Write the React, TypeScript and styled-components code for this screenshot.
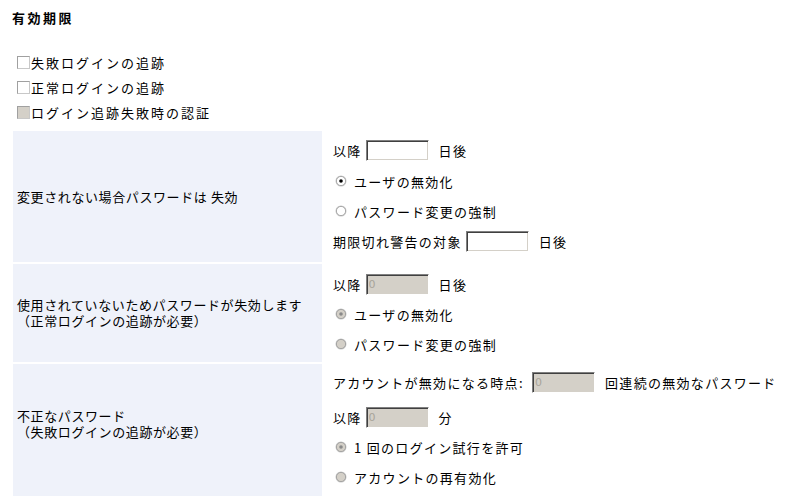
import React from "react";
import styled, { createGlobalStyle } from "styled-components";

const GlobalStyle = createGlobalStyle`
  body {
    margin: 8px;
    background: #ffffff;
    color: #000000;
    font-family: "Noto Sans CJK JP", "Noto Sans", sans-serif;
    font-size: 13px;
  }
`;

const Title = styled.h3`
  margin: 0;
  padding-left: 4px;
  height: 20px;
  line-height: 20px;
  font-size: 13px;
  font-weight: bold;
  letter-spacing: 2.5px;
`;

const CheckList = styled.div`
  margin-top: 22px;
  padding-left: 9px;
  display: flex;
  flex-direction: column;
`;

const CheckRow = styled.label`
  height: 25px;
  display: flex;
  align-items: center;
  gap: 1px;
  letter-spacing: 2px;
`;

const Box = styled.span<{ $disabled?: boolean }>`
  width: 13px;
  height: 13px;
  box-sizing: border-box;
  border: 1px solid #a0a0a0;
  border-right-color: #c8c8c8;
  border-bottom-color: #c8c8c8;
  background: ${(p) => (p.$disabled ? "#d4d0c8" : "#ffffff")};
`;

const Table = styled.div`
  margin: 6px 0 0 5px;
  display: grid;
  grid-template-columns: 309px 1fr;
  gap: 2px;
`;

const LabelCell = styled.div<{ $pb?: number }>`
  background: #eff2fa;
  padding: 0 0 ${(p) => p.$pb ?? 0}px 4px;
  display: flex;
  flex-direction: column;
  justify-content: center;
  line-height: 16px;
  letter-spacing: 0.6px;
`;

const LabelLine = styled.span`
  display: block;
  white-space: nowrap;
`;

const FieldCell = styled.div<{ $pt: number; $pb: number }>`
  padding: ${(p) => p.$pt}px 9px ${(p) => p.$pb}px 9px;
  display: flex;
  flex-direction: column;
`;

const Line = styled.div<{ $h?: number; $mb?: number }>`
  height: ${(p) => p.$h ?? 30}px;
  margin-bottom: ${(p) => p.$mb ?? 0}px;
  display: flex;
  align-items: center;
  white-space: pre;
  letter-spacing: 1.3px;
`;

const Input = styled.input`
  box-sizing: border-box;
  width: 63px;
  height: 21px;
  margin: 0 10px 0 4px;
  padding: 0 2px;
  font-family: "DejaVu Sans", sans-serif;
  font-size: 11px;
  color: #a8a49a;
  background: ${(p) => (p.disabled ? "#d4d0c8" : "#ffffff")};
  border: 1px solid;
  border-color: #808080 #ffffff #ffffff #808080;
  box-shadow: inset 1px 1px 0 #404040, inset -1px -1px 0 #d4d0c8;
  outline: none;
`;

const RadioWrap = styled.span`
  display: inline-flex;
  width: 12px;
  height: 12px;
  margin: 0 7px 0 2px;
`;

const Radio = ({ checked, disabled }: { checked?: boolean; disabled?: boolean }) => (
  <RadioWrap>
    <svg width="12" height="12" viewBox="0 0 12 12">
      <circle cx="6" cy="6" r="5.5" fill="#c8c8c8" />
      <circle cx="6" cy="6" r="4.6" fill={disabled ? "#d4d0c8" : "#ffffff"} stroke="#9a9a9a" strokeWidth="0.8" />
      {checked && <circle cx="6" cy="6" r="1.8" fill={disabled ? "#8a8a8a" : "#000000"} />}
    </svg>
  </RadioWrap>
);

export default function App() {
  return (
    <>
      <GlobalStyle />
      <Title>有効期限</Title>
      <CheckList>
        <CheckRow>
          <Box />
          失敗ログインの追跡
        </CheckRow>
        <CheckRow>
          <Box />
          正常ログインの追跡
        </CheckRow>
        <CheckRow>
          <Box $disabled />
          ログイン追跡失敗時の認証
        </CheckRow>
      </CheckList>
      <Table>
        <LabelCell>
          <LabelLine>変更されない場合パスワードは 失効</LabelLine>
        </LabelCell>
        <FieldCell $pt={3} $pb={6}>
          <Line $h={32}>
            以降
            <Input defaultValue="" />
            日後
          </Line>
          <Line>
            <Radio checked />
            ユーザの無効化
          </Line>
          <Line>
            <Radio />
            パスワード変更の強制
          </Line>
          <Line>
            期限切れ警告の対象
            <Input defaultValue="" />
            日後
          </Line>
        </FieldCell>

        <LabelCell>
          <LabelLine>使用されていないためパスワードが失効します</LabelLine>
          <LabelLine>（正常ログインの追跡が必要）</LabelLine>
        </LabelCell>
        <FieldCell $pt={5} $pb={3}>
          <Line>
            以降
            <Input disabled defaultValue="0" />
            日後
          </Line>
          <Line>
            <Radio checked disabled />
            ユーザの無効化
          </Line>
          <Line>
            <Radio disabled />
            パスワード変更の強制
          </Line>
        </FieldCell>

        <LabelCell $pb={12}>
          <LabelLine>不正なパスワード</LabelLine>
          <LabelLine>（失敗ログインの追跡が必要）</LabelLine>
        </LabelCell>
        <FieldCell $pt={3} $pb={4}>
          <Line $mb={5}>
            {"アカウントが無効になる時点: "}
            <Input disabled defaultValue="0" />
            回連続の無効なパスワード
          </Line>
          <Line>
            以降
            <Input disabled defaultValue="0" />分
          </Line>
          <Line>
            <Radio checked disabled />1 回のログイン試行を許可
          </Line>
          <Line>
            <Radio disabled />
            アカウントの再有効化
          </Line>
        </FieldCell>
      </Table>
    </>
  );
}
